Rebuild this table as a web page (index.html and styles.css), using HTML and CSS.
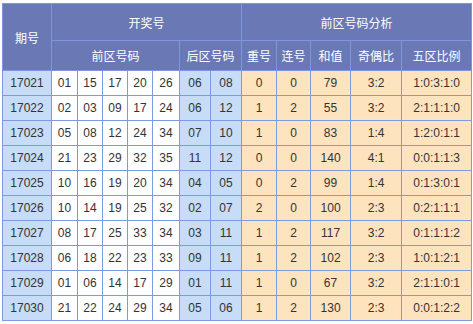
FILE: index.html
```html
<!DOCTYPE html>
<html lang="zh">
<head>
<meta charset="utf-8">
<link rel="stylesheet" href="styles.css">
</head>
<body>
<table class="draw">
  <colgroup>
    <col class="c-issue"><col class="c-f1"><col class="c-f"><col class="c-f"><col class="c-f"><col class="c-f5">
    <col class="c-b"><col class="c-b"><col class="c-rep"><col class="c-con"><col class="c-sum"><col class="c-oe"><col class="c-zone">
  </colgroup>
  <thead>
    <tr class="h1">
      <th rowspan="2">期号</th>
      <th colspan="7">开奖号</th>
      <th colspan="5">前区号码分析</th>
    </tr>
    <tr class="h2">
      <th colspan="5">前区号码</th>
      <th colspan="2">后区号码</th>
      <th>重号</th><th>连号</th><th>和值</th><th>奇偶比</th><th>五区比例</th>
    </tr>
  </thead>
  <tbody>
    <tr><td class="issue">17021</td><td>01</td><td>15</td><td>17</td><td>20</td><td>26</td><td class="back">06</td><td class="back">08</td><td class="an">0</td><td class="an">0</td><td class="an">79</td><td class="an">3:2</td><td class="an">1:0:3:1:0</td></tr>
    <tr><td class="issue">17022</td><td>02</td><td>03</td><td>09</td><td>17</td><td>24</td><td class="back">06</td><td class="back">12</td><td class="an">1</td><td class="an">2</td><td class="an">55</td><td class="an">3:2</td><td class="an">2:1:1:1:0</td></tr>
    <tr><td class="issue">17023</td><td>05</td><td>08</td><td>12</td><td>24</td><td>34</td><td class="back">07</td><td class="back">10</td><td class="an">1</td><td class="an">0</td><td class="an">83</td><td class="an">1:4</td><td class="an">1:2:0:1:1</td></tr>
    <tr><td class="issue">17024</td><td>21</td><td>23</td><td>29</td><td>32</td><td>35</td><td class="back">11</td><td class="back">12</td><td class="an">0</td><td class="an">0</td><td class="an">140</td><td class="an">4:1</td><td class="an">0:0:1:1:3</td></tr>
    <tr><td class="issue">17025</td><td>10</td><td>16</td><td>19</td><td>20</td><td>34</td><td class="back">04</td><td class="back">05</td><td class="an">0</td><td class="an">2</td><td class="an">99</td><td class="an">1:4</td><td class="an">0:1:3:0:1</td></tr>
    <tr><td class="issue">17026</td><td>10</td><td>14</td><td>19</td><td>25</td><td>32</td><td class="back">02</td><td class="back">07</td><td class="an">2</td><td class="an">0</td><td class="an">100</td><td class="an">2:3</td><td class="an">0:2:1:1:1</td></tr>
    <tr><td class="issue">17027</td><td>08</td><td>17</td><td>25</td><td>33</td><td>34</td><td class="back">03</td><td class="back">11</td><td class="an">1</td><td class="an">2</td><td class="an">117</td><td class="an">3:2</td><td class="an">0:1:1:1:2</td></tr>
    <tr><td class="issue">17028</td><td>06</td><td>18</td><td>22</td><td>23</td><td>33</td><td class="back">09</td><td class="back">11</td><td class="an">1</td><td class="an">2</td><td class="an">102</td><td class="an">2:3</td><td class="an">1:0:1:2:1</td></tr>
    <tr><td class="issue">17029</td><td>01</td><td>06</td><td>14</td><td>17</td><td>29</td><td class="back">01</td><td class="back">11</td><td class="an">1</td><td class="an">0</td><td class="an">67</td><td class="an">3:2</td><td class="an">2:1:1:0:1</td></tr>
    <tr><td class="issue">17030</td><td>21</td><td>22</td><td>24</td><td>29</td><td>34</td><td class="back">05</td><td class="back">06</td><td class="an">1</td><td class="an">2</td><td class="an">130</td><td class="an">2:3</td><td class="an">0:0:1:2:2</td></tr>
  </tbody>
</table>
</body>
</html>
```
FILE: styles.css
```css
html, body {
  margin: 0;
  padding: 0;
  background: #ffffff;
}
body {
  padding: 3px 0 0 2px;
  font-family: "Liberation Sans", Arial, "Noto Sans CJK SC", sans-serif;
  font-size: 12px;
  color: #333333;
}
.draw {
  border-collapse: collapse;
  table-layout: fixed;
  width: 470px;
}
.draw th, .draw td {
  border: 1px solid #7c9be0;
  padding: 0;
  text-align: center;
  vertical-align: middle;
}
.draw th {
  background: #6b78b6;
  color: #ffffff;
  font-weight: normal;
  font-family: "Noto Sans CJK SC", "Liberation Sans", sans-serif;
  font-size: 12px;
  border-color: #7f96de;
}
.h1 th { height: 36px; }
.h2 th { height: 29px; }
.draw td { height: 24px; }
.draw td.issue { background: #c7dcf6; }
.draw td.back { background: #c7dcf6; }
.draw td.an { background: #fde4bf; }
.c-issue { width: 49px; }
.c-f1 { width: 26px; }
.c-f { width: 25px; }
.c-f5 { width: 27px; }
.c-b { width: 31px; }
.c-rep { width: 35px; }
.c-con { width: 34px; }
.c-sum { width: 40px; }
.c-oe { width: 51px; }
.c-zone { width: 70px; }
```
